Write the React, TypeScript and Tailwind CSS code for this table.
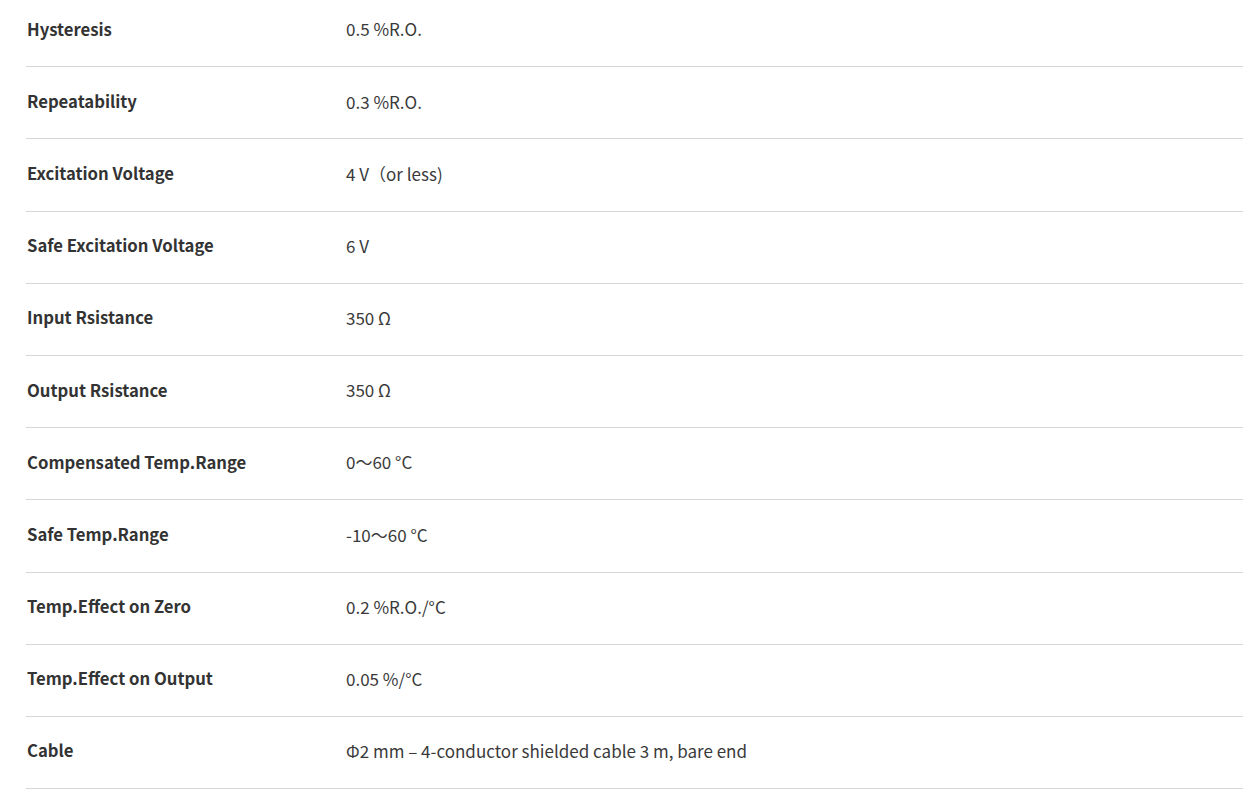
import React from "react";

type Spec = { label: string; value: string };

const SPECS: Spec[] = [
  { label: "Hysteresis", value: "0.5 %R.O." },
  { label: "Repeatability", value: "0.3 %R.O." },
  { label: "Excitation Voltage", value: "4 V（or less)" },
  { label: "Safe Excitation Voltage", value: "6 V" },
  { label: "Input Rsistance", value: "350 Ω" },
  { label: "Output Rsistance", value: "350 Ω" },
  { label: "Compensated Temp.Range", value: "0～60 °C" },
  { label: "Safe Temp.Range", value: "-10～60 °C" },
  { label: "Temp.Effect on Zero", value: "0.2 %R.O./°C" },
  { label: "Temp.Effect on Output", value: "0.05 %/°C" },
  { label: "Cable", value: "Φ2 mm – 4-conductor shielded cable 3 m, bare end" },
];

export default function App() {
  return (
    <div
      className="min-h-[799px] overflow-hidden bg-white pl-[26px] text-[#333]"
      style={{ fontFamily: '"Noto Sans CJK JP", "Noto Sans", sans-serif' }}
    >
      <dl className="-mt-[5px]">
        {SPECS.map((s) => (
          <div
            key={s.label}
            className="flex h-[72.2px] items-center border-b border-[#d6d6d6] pb-[3px]"
          >
            <dt className="w-[320px] pl-px text-[16.7px] font-bold">{s.label}</dt>
            <dd className="text-[17px] text-[#3a3a3a]">{s.value}</dd>
          </div>
        ))}
      </dl>
    </div>
  );
}
